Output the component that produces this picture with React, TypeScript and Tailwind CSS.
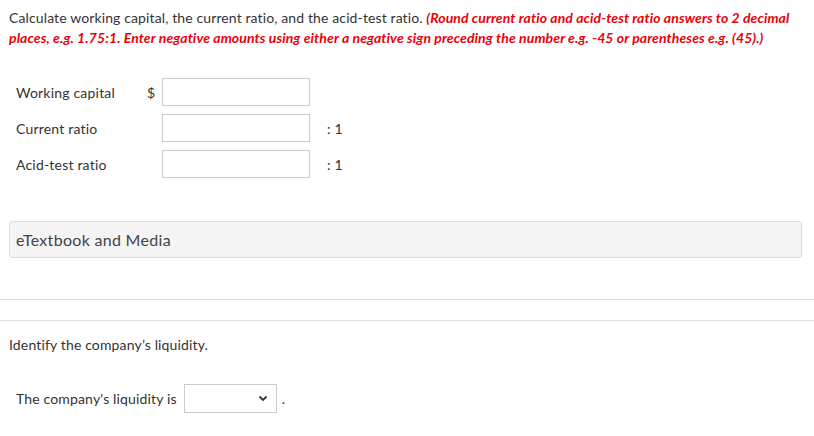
import React from "react";

export default function App() {
  return (
    <div className="w-[814px] h-[436px] bg-white text-[#333] overflow-hidden" style={{ fontFamily: "Lato, 'Noto Sans', sans-serif" }}>
      <div className="px-[9px] pt-[8px] text-[14px] leading-[20px]">
        <span className="tracking-[0.12px]">Calculate working capital, the current ratio, and the acid-test ratio.</span>{" "}
        <span className="text-[#e8000b] font-bold italic tracking-[0.1px]">
          (Round current ratio and acid-test ratio answers to 2 decimal places, e.g. 1.75:1. Enter negative amounts using either a negative sign preceding the number e.g. -45 or parentheses e.g. (45).)
        </span>
      </div>

      <div className="mt-[30px] pl-[16px] flex flex-col gap-[8px] text-[14px] tracking-[0.2px]">
        <div className="flex items-center h-[28px]">
          <div className="w-[131px]">Working capital</div>
          <div className="w-[15px]">$</div>
          <div className="w-[148px] h-[28px] border border-[#ccc] bg-white"></div>
        </div>
        <div className="flex items-center h-[28px]">
          <div className="w-[146px]">Current ratio</div>
          <div className="w-[148px] h-[28px] border border-[#ccc] bg-white"></div>
          <div className="ml-[17px]">: 1</div>
        </div>
        <div className="flex items-center h-[28px]">
          <div className="w-[146px]">Acid-test ratio</div>
          <div className="w-[148px] h-[28px] border border-[#ccc] bg-white"></div>
          <div className="ml-[17px]">: 1</div>
        </div>
      </div>

      <div className="mt-[43px] ml-[9px] mr-[12px] h-[37px] bg-[#f4f4f4] border border-[#ddd] rounded-[3px] flex items-center px-[6px] text-[16px] tracking-[0.3px] text-[#444]">
        eTextbook and Media
      </div>

      <div className="mt-[41px] h-[22px] border-t border-b border-[#ddd]"></div>

      <div className="mt-[13px] px-[9px] text-[14px] tracking-[0.15px]">Identify the company’s liquidity.</div>

      <div className="mt-[29px] pl-[16px] flex items-center text-[14px] tracking-[0.15px]">
        <span>The company's liquidity is</span>
        <div className="ml-[7px] w-[93px] h-[29px] border border-[#ccc] bg-white flex items-center justify-end pr-[8px]">
          <svg width="10" height="7" viewBox="0 0 10 7">
            <path d="M1.5 1.5 L5 5 L8.5 1.5" fill="none" stroke="#333" strokeWidth="1.8" />
          </svg>
        </div>
        <span className="ml-[5px]">.</span>
      </div>
    </div>
  );
}
